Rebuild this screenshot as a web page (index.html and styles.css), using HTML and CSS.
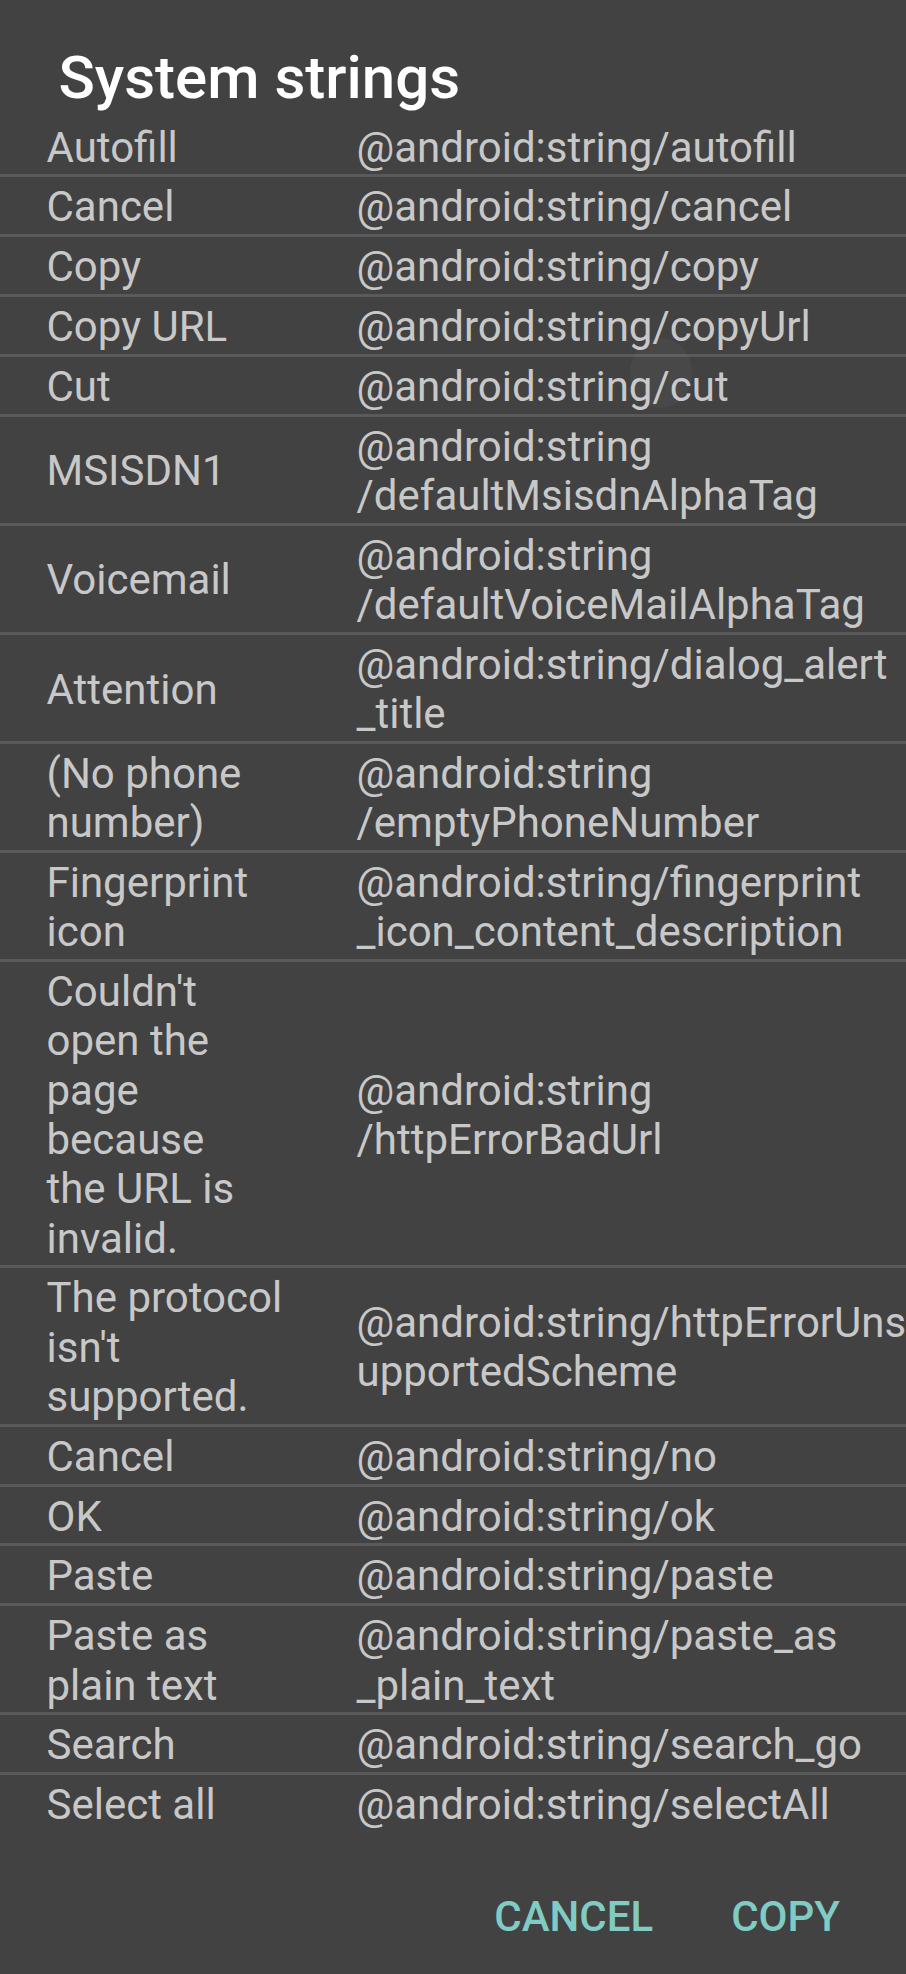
FILE: index.html
```html
<!DOCTYPE html>
<html>
<head>
<meta charset="utf-8">
<link rel="stylesheet" href="styles.css">
</head>
<body>
<div class="dialog">
  <h1 class="title">System strings</h1>
  <div class="list">
    <div class="row"><div class="name">Autofill</div><div class="res">@android:string/autofill</div></div>
    <div class="row"><div class="name">Cancel</div><div class="res">@android:string/cancel</div></div>
    <div class="row"><div class="name">Copy</div><div class="res">@android:string/copy</div></div>
    <div class="row"><div class="name">Copy URL</div><div class="res">@android:string/copyUrl</div></div>
    <div class="row"><div class="name">Cut</div><div class="res">@android:string/cut</div></div>
    <div class="row"><div class="name">MSISDN1</div><div class="res">@android:string<br>/defaultMsisdnAlphaTag</div></div>
    <div class="row"><div class="name">Voicemail</div><div class="res">@android:string<br>/defaultVoiceMailAlphaTag</div></div>
    <div class="row"><div class="name">Attention</div><div class="res">@android:string/dialog_alert<br>_title</div></div>
    <div class="row"><div class="name">(No phone<br>number)</div><div class="res">@android:string<br>/emptyPhoneNumber</div></div>
    <div class="row"><div class="name">Fingerprint<br>icon</div><div class="res">@android:string/fingerprint<br>_icon_content_description</div></div>
    <div class="row"><div class="name">Couldn't<br>open the<br>page<br>because<br>the URL is<br>invalid.</div><div class="res">@android:string<br>/httpErrorBadUrl</div></div>
    <div class="row"><div class="name">The protocol<br>isn't<br>supported.</div><div class="res">@android:string/httpErrorUns<br>upportedScheme</div></div>
    <div class="row"><div class="name">Cancel</div><div class="res">@android:string/no</div></div>
    <div class="row"><div class="name">OK</div><div class="res">@android:string/ok</div></div>
    <div class="row"><div class="name">Paste</div><div class="res">@android:string/paste</div></div>
    <div class="row"><div class="name">Paste as<br>plain text</div><div class="res">@android:string/paste_as<br>_plain_text</div></div>
    <div class="row"><div class="name">Search</div><div class="res">@android:string/search_go</div></div>
    <div class="row"><div class="name">Select all</div><div class="res">@android:string/selectAll</div></div>
  </div>
  <div class="buttons">
    <span class="btn">CANCEL</span>
    <span class="btn">COPY</span>
  </div>
  <div class="touch"></div>
</div>
</body>
</html>
```

FILE: styles.css
```css
html, body {
  margin: 0;
  padding: 0;
  background: #424242;
}

.dialog {
  position: relative;
  width: 906px;
  height: 1974px;
  overflow: hidden;
  background: #424242;
  font-family: Roboto, "Liberation Sans", sans-serif;
}

.title {
  margin: 43px 0 4.7px 0;
  padding-left: 58.5px;
  font-size: 60px;
  line-height: 70px;
  font-weight: 500;
  color: #ffffff;
}

.list {
  display: flex;
  flex-direction: column;
}

.row {
  display: grid;
  grid-template-columns: 310px 1fr;
  align-items: center;
  padding: 5px 0 2.5px 46.5px;
  border-top: 3px solid #5a5a5a;
  font-size: 42px;
  line-height: 49.3px;
  color: #c8c8c8;
}

.row:first-child {
  border-top: none;
}

.name, .res {
  white-space: nowrap;
}

.buttons {
  display: flex;
  justify-content: flex-end;
  gap: 78px;
  padding: 60px 66px 0 0;
}

.btn {
  font-size: 42px;
  line-height: 49.2px;
  font-weight: 500;
  color: #80cbc4;
}

.touch {
  position: absolute;
  left: 630px;
  top: 338px;
  width: 62px;
  height: 70px;
  border-radius: 50%;
  background: rgba(255, 255, 255, 0.035);
}
```
